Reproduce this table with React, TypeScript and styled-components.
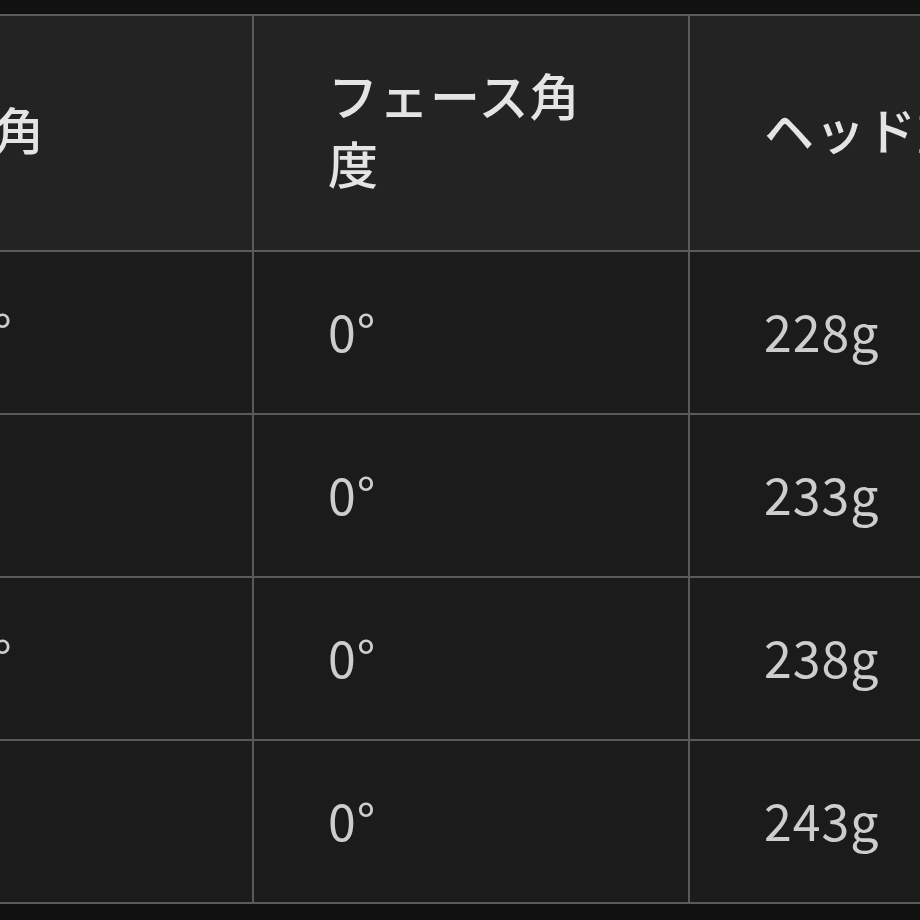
import styled, { createGlobalStyle } from "styled-components";

const GlobalStyle = createGlobalStyle`
  html, body {
    margin: 0;
    padding: 0;
    background: #111111;
  }
`;

const Frame = styled.div`
  width: 920px;
  height: 920px;
  overflow: hidden;
  padding-top: 14px;
  box-sizing: border-box;
  background: #111111;
`;

// the crop starts partway into the first column
const SpecTable = styled.table`
  margin-left: -184px;
  width: 1308px;
  border-collapse: collapse;
  table-layout: fixed;
  font-family: "Noto Sans CJK JP", "Noto Sans", sans-serif;
  font-size: 50px;
  line-height: 68px;
`;

const HeadRow = styled.tr`
  height: 236px;
  background: #232323;
`;

const BodyRow = styled.tr`
  height: 163px;
  background: #1b1b1b;
`;

const HeadCell = styled.th`
  border: 2px solid #5a5a5a;
  padding: 0 74px 10px 74px;
  text-align: left;
  vertical-align: middle;
  font-weight: 500;
  color: #e4e4e4;
  letter-spacing: 1px;
`;

const Cell = styled.td`
  border: 2px solid #5a5a5a;
  padding: 0 74px 5px 74px;
  text-align: left;
  vertical-align: middle;
  font-weight: 400;
  color: #cdcdcd;
  letter-spacing: 1px;
`;

const rows = [
  { lie: "57.5°", face: "0°", weight: "228g" },
  { lie: "58°", face: "0°", weight: "233g" },
  { lie: "58.5°", face: "0°", weight: "238g" },
  { lie: "59°", face: "0°", weight: "243g" },
];

function App() {
  return (
    <Frame>
      <GlobalStyle />
      <SpecTable>
        <colgroup>
          <col style={{ width: 436 }} />
          <col style={{ width: 436 }} />
          <col style={{ width: 436 }} />
        </colgroup>
        <thead>
          <HeadRow>
            <HeadCell>ライ角</HeadCell>
            <HeadCell>フェース角度</HeadCell>
            <HeadCell>ヘッド重量</HeadCell>
          </HeadRow>
        </thead>
        <tbody>
          {rows.map((r) => (
            <BodyRow key={r.weight}>
              <Cell>{r.lie}</Cell>
              <Cell>{r.face}</Cell>
              <Cell>{r.weight}</Cell>
            </BodyRow>
          ))}
        </tbody>
      </SpecTable>
    </Frame>
  );
}

export default App;
